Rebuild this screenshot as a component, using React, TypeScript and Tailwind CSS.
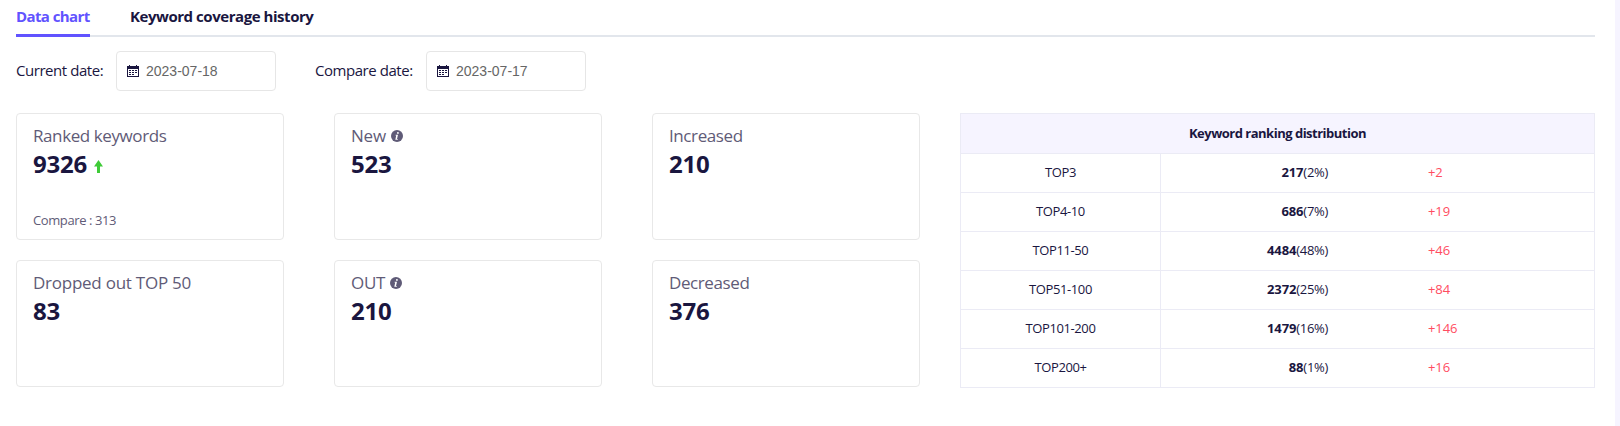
import React from "react";

function CalendarIcon() {
  return (
    <svg width="12" height="12" viewBox="0 0 12 12" shapeRendering="crispEdges" className="shrink-0 text-[#1a163f]" fill="currentColor">
      <path fillRule="evenodd" d="M0 1h2V0h1v1h6V0h1v1h2v11H0zM1 4v7h10V4z" />
      <path d="M2 5h2v1H2zM5 5h2v1H5zM8 5h2v1H8zM2 7h2v1H2zM5 7h2v1H5zM8 7h2v1H8zM2 9h2v1H2zM5 9h2v1H5z" />
    </svg>
  );
}

function InfoIcon() {
  return (
    <svg width="12" height="12" viewBox="0 0 12 12" className="shrink-0">
      <circle cx="6" cy="6" r="6" fill="#5f5b77" />
      <circle cx="6.9" cy="2.9" r="0.95" fill="#fff" />
      <path d="M4.7 4.8h2.3L6 8.9h.8v.9H4.3L5.2 5.6h-.7z" fill="#fff" />
    </svg>
  );
}

function UpArrow() {
  return (
    <svg width="9" height="13" viewBox="0 0 9 13" className="shrink-0">
      <path d="M4.5 0 9 6.5H6V13H3V6.5H0z" fill="#3fcb38" />
    </svg>
  );
}

function DateField({ label, value, labelClass }: { label: string; value: string; labelClass: string }) {
  return (
    <div className="flex items-center">
      <span className={`whitespace-nowrap pb-[2px] text-[15px] tracking-[-0.45px] text-[#1a163f] ${labelClass}`}>{label}</span>
      <div className="flex h-10 w-40 items-center rounded-[4px] border border-[#e6e6e6] pl-[10px]">
        <CalendarIcon />
        <span className="ml-[7px] font-['Liberation_Sans',sans-serif] text-[14px] text-[#666]">{value}</span>
      </div>
    </div>
  );
}

type Card = { title: string; value: string; info?: boolean; up?: boolean; compare?: string; tracking: string };

const cards: Card[] = [
  { title: "Ranked keywords", value: "9326", up: true, compare: "313", tracking: "tracking-[-0.41px]" },
  { title: "New", value: "523", info: true, tracking: "tracking-[-0.2px]" },
  { title: "Increased", value: "210", tracking: "tracking-[-0.4px]" },
  { title: "Dropped out TOP 50", value: "83", tracking: "tracking-[-0.25px]" },
  { title: "OUT", value: "210", info: true, tracking: "tracking-[-0.3px]" },
  { title: "Decreased", value: "376", tracking: "tracking-[-0.4px]" },
];

function StatCard({ card }: { card: Card }) {
  return (
    <div className="flex h-[127px] flex-col rounded-[4px] border border-[#e8e8e8] px-4">
      <div className="mt-[10px] flex h-6 items-center gap-[5px] text-[17px] text-[#5f5b77]">
        <span className={`${card.tracking} pb-px`}>{card.title}</span>
        {card.info && <InfoIcon />}
      </div>
      <div className="flex h-8 items-center gap-[7px] text-[24px] font-bold text-[#1a163f]">
        <span className="tracking-[-0.2px]">{card.value}</span>
        {card.up && <span className="pt-1"><UpArrow /></span>}
      </div>
      {card.compare && (
        <div className="mt-[31px] flex h-5 items-center text-[13px] tracking-[-0.4px] text-[#5f5b77]">Compare : {card.compare}</div>
      )}
    </div>
  );
}

const rows = [
  ["TOP3", "217", "(2%)", "+2"],
  ["TOP4-10", "686", "(7%)", "+19"],
  ["TOP11-50", "4484", "(48%)", "+46"],
  ["TOP51-100", "2372", "(25%)", "+84"],
  ["TOP101-200", "1479", "(16%)", "+146"],
  ["TOP200+", "88", "(1%)", "+16"],
];

export default function App() {
  return (
    <div className="flex h-[426px] w-[1620px] overflow-hidden bg-white font-['Open_Sans','Noto_Sans',sans-serif] text-[#1a163f]">
      <main className="w-[1615px] pl-4 pr-5">
        <nav className="flex h-[37px] gap-10 bg-[linear-gradient(#e2e6ec,#e2e6ec)] bg-[length:100%_2px] bg-bottom bg-no-repeat text-[15px] font-bold">
          <div className="h-[37px] w-[74px] whitespace-nowrap border-b-[3px] border-[#6153ff] leading-[32px] tracking-[-0.6px] text-[#6153ff]">Data chart</div>
          <div className="whitespace-nowrap leading-[32px] tracking-[-0.45px]">Keyword coverage history</div>
        </nav>
        <div className="mt-[14px] flex gap-[39px]">
          <DateField label="Current date:" value="2023-07-18" labelClass="w-[100px]" />
          <DateField label="Compare date:" value="2023-07-17" labelClass="w-[111px]" />
        </div>
        <div className="mt-[22px] flex items-start">
          <section className="grid w-[904px] grid-cols-[268px_268px_268px] gap-x-[50px] gap-y-5">
            {cards.map((card) => (
              <StatCard key={card.title} card={card} />
            ))}
          </section>
          <section className="ml-10 w-[635px] border border-[#ebebf5] text-[13px]">
            <h2 className="h-[39px] bg-[#f6f4ff] text-center text-[13px] font-bold leading-[39px] tracking-[-0.5px]">Keyword ranking distribution</h2>
            {rows.map(([name, count, share, delta]) => (
              <div key={name} className="flex h-[39px] border-t border-[#ebebf5] leading-[37px]">
                <div className="w-[200px] border-r border-[#ebebf5] text-center tracking-[-0.4px]">{name}</div>
                <div className="w-[167px] text-right">
                  <b className="tracking-[-0.15px]">{count}</b>
                  <span className="tracking-[-0.3px]">{share}</span>
                </div>
                <div className="ml-[100px] tracking-[-0.1px] text-[#ff4d5f]">{delta}</div>
              </div>
            ))}
          </section>
        </div>
      </main>
      <aside className="flex-1 bg-[#f6f4ff]" />
    </div>
  );
}
